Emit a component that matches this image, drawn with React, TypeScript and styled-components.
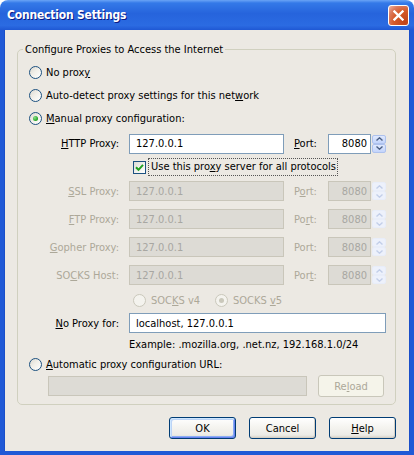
import React from "react";
import styled, { createGlobalStyle, css } from "styled-components";

const GlobalStyle = createGlobalStyle`
  html, body { margin: 0; padding: 0; background: #ffffff; }
  body {
    font-family: "DejaVu Sans Condensed", "DejaVu Sans", Tahoma, sans-serif;
    font-size: 11px;
    color: #000;
  }
  * { box-sizing: border-box; }
`;

const GREY = "#aca899";

const Window = styled.div`
  width: 414px;
  height: 455px;
  display: flex;
  flex-direction: column;
  border-radius: 8px 8px 0 0;
  overflow: hidden;
`;

const TitleBar = styled.div`
  flex: none;
  height: 30px;
  display: flex;
  align-items: center;
  justify-content: space-between;
  padding: 0 5px 0 7px;
  background: linear-gradient(
    180deg,
    #6aa4f6 0%,
    #3479e8 10%,
    #2664dc 45%,
    #2b6be2 85%,
    #1f58d4 100%
  );
`;

const Title = styled.span`
  font-family: "DejaVu Sans Condensed", "DejaVu Sans", sans-serif;
  font-weight: bold;
  font-size: 12px;
  color: #fff;
  text-shadow: 1px 1px #0a1883;
  letter-spacing: -0.2px;
`;

const CloseButton = styled.span`
  width: 21px;
  height: 21px;
  border: 1px solid #fff;
  border-radius: 3px;
  display: flex;
  align-items: center;
  justify-content: center;
  background: radial-gradient(
    circle at 85% 85%,
    #c0441a 0%,
    #d65a28 50%,
    #db7a5e 75%,
    #f0b8a4 100%
  );
`;

const Body = styled.div`
  flex: 1;
  display: flex;
  flex-direction: column;
  background: #ece9e3;
  border: solid #2059d6;
  border-width: 0 4px 4px;
  box-shadow: inset 1px 0 #1a4fc9, inset -1px 0 #1a4fc9;
  padding: 13px 14px 12px 13px;
`;

const Group = styled.fieldset`
  margin: 0;
  padding: 5px 9px 7px 0;
  min-width: 0;
  border: 1px solid #d0d0bf;
  border-radius: 5px;
`;

const Legend = styled.legend`
  margin-left: 5px;
  padding: 0 2px;
  line-height: 13px;
`;

const OptionRow = styled.div<{ $h?: number; $disabled?: boolean }>`
  display: flex;
  align-items: center;
  gap: 4px;
  height: ${(p) => p.$h ?? 23}px;
  padding-left: 11px;
  color: ${(p) => (p.$disabled ? GREY : "#000")};
  white-space: nowrap;
`;

const RadioCircle = styled.span<{ $checked?: boolean; $disabled?: boolean }>`
  flex: none;
  width: 13px;
  height: 13px;
  border-radius: 50%;
  border: 1px solid ${(p) => (p.$disabled ? "#cac8bb" : "#1c5180")};
  background: ${(p) =>
    p.$disabled
      ? "#f4f3ee"
      : "linear-gradient(135deg, #dcd9d1 0%, #f1efe9 45%, #ffffff 100%)"};
  display: flex;
  align-items: center;
  justify-content: center;
  &::after {
    content: "";
    display: ${(p) => (p.$checked ? "block" : "none")};
    width: 5px;
    height: 5px;
    border-radius: 50%;
    background: ${(p) =>
      p.$disabled ? "#cac8bb" : "radial-gradient(circle at 35% 35%, #8be08b, #21a121 70%)"};
  }
`;

const CheckBox = styled.span`
  flex: none;
  width: 13px;
  height: 13px;
  border: 1px solid #1c5180;
  background: linear-gradient(135deg, #dcdcd7 0%, #f3f3ef 60%, #ffffff 100%);
  display: flex;
  align-items: center;
  justify-content: center;
`;

const ProxyGrid = styled.div`
  display: grid;
  grid-template-columns: 101px 155px 24px 58px;
  column-gap: 10px;
  grid-template-rows: 27px 20px 28px 28px 28px 28px 22px 24px 19px;
  align-items: center;
`;

const FieldLabel = styled.span<{ $disabled?: boolean }>`
  justify-self: end;
  white-space: nowrap;
  color: ${(p) => (p.$disabled ? GREY : "#000")};
`;

const PortLabel = styled.span<{ $disabled?: boolean }>`
  white-space: nowrap;
  color: ${(p) => (p.$disabled ? GREY : "#000")};
`;

const TextInput = styled.input<{ $right?: boolean; $span?: boolean }>`
  height: 20px;
  width: 100%;
  min-width: 0;
  margin: 0;
  font: inherit;
  color: #000;
  background: #fff;
  border: 1px solid #7f9db9;
  padding: 0 ${(p) => (p.$right ? 3 : 4)}px 0 ${(p) => (p.$right ? 2 : 6)}px;
  text-align: ${(p) => (p.$right ? "right" : "left")};
  outline: none;
  ${(p) => p.$span && "grid-column: 2 / -1;"}
  &:disabled {
    background: #dddbd5;
    border-color: #c9c6ba;
    color: #a8a7a2;
    -webkit-text-fill-color: #a8a7a2;
    opacity: 1;
  }
`;

const PortField = styled.div`
  display: flex;
  align-items: center;
  height: 20px;
`;

const Spinner = styled.div`
  flex: none;
  width: 15px;
  height: 20px;
  display: flex;
  flex-direction: column;
  padding: 1px 0 1px 1px;
`;

const SpinButton = styled.span<{ $disabled?: boolean }>`
  flex: 1;
  border-radius: 2px;
  display: flex;
  align-items: center;
  justify-content: center;
  ${(p) =>
    p.$disabled
      ? css`
          border: 1px solid #e8edf9;
          background: #edf1fb;
        `
      : css`
          border: 1px solid #aec2ee;
          background: linear-gradient(180deg, #e0e9fd 0%, #c3d4fb 100%);
        `}
`;

const CheckRow = styled.div`
  grid-column: 2 / -1;
  display: flex;
  align-items: center;
  padding-left: 4px;
  height: 20px;
`;

const FocusText = styled.span`
  margin-left: 2px;
  padding: 0 1px 0 2px;
  height: 18px;
  line-height: 16px;
  border: 1px dotted #555;
  white-space: nowrap;
`;

const VersionRow = styled.div`
  grid-column: 2 / -1;
  display: flex;
  align-items: center;
  padding-left: 4px;
  color: ${GREY};
`;

const VersionOption = styled.span<{ $w?: number }>`
  display: flex;
  align-items: center;
  gap: 5px;
  width: ${(p) => (p.$w ? `${p.$w}px` : "auto")};
  white-space: nowrap;
`;

const Example = styled.span`
  grid-column: 2 / -1;
  white-space: nowrap;
`;

const UrlRow = styled.div`
  display: flex;
  align-items: center;
  height: 22px;
  padding-left: 30px;
  gap: 11px;
`;

const UrlBox = styled.input`
  width: 259px;
  height: 20px;
  margin: 0;
  font: inherit;
  background: #dddbd5;
  border: 1px solid #c9c6ba;
  outline: none;
`;

const PushButton = styled.button<{ $default?: boolean }>`
  width: 67px;
  height: 22px;
  margin: 0;
  padding: 0;
  font: inherit;
  color: #000;
  border: 1px solid #003c74;
  border-radius: 3px;
  background: linear-gradient(180deg, #ffffff 0%, #f5f4f0 45%, #ecebe6 85%, #d6d0c5 100%);
  box-shadow: inset -1px -1px #d6d0c5;
  ${(p) =>
    p.$default &&
    css`
      box-shadow: inset 1px 1px #cee7ff, inset -1px -1px #6982ee, inset 2px 2px #bcd4f6,
        inset -2px -2px #89adf4;
    `}
  &:disabled {
    color: ${GREY};
    border-color: #c9c7ba;
    background: #f5f4ea;
    box-shadow: none;
  }
`;

const ReloadButton = styled(PushButton)`
  width: 66px;
`;

const ButtonRow = styled.div`
  margin-top: auto;
  display: flex;
  justify-content: flex-end;
  gap: 13px;
`;

const U = styled.span`
  text-decoration: underline;
  text-underline-offset: 1px;
`;

const Chevron = ({ up, color }: { up?: boolean; color: string }) => (
  <svg width="7" height="4" viewBox="0 0 7 4">
    <path
      d={up ? "M0.5 3.5 L3.5 0.8 L6.5 3.5" : "M0.5 0.5 L3.5 3.2 L6.5 0.5"}
      fill="none"
      stroke={color}
      strokeWidth="1.4"
    />
  </svg>
);

const Port = ({ disabled }: { disabled?: boolean }) => (
  <PortField>
    <TextInput $right value="8080" readOnly disabled={disabled} />
    <Spinner>
      <SpinButton $disabled={disabled}>
        <Chevron up color={disabled ? "#c3cfe9" : "#4d6185"} />
      </SpinButton>
      <SpinButton $disabled={disabled}>
        <Chevron color={disabled ? "#c3cfe9" : "#4d6185"} />
      </SpinButton>
    </Spinner>
  </PortField>
);

type ProxyRowProps = {
  label: React.ReactNode;
  port: React.ReactNode;
  disabled?: boolean;
};

const ProxyRow = ({ label, port, disabled }: ProxyRowProps) => (
  <>
    <FieldLabel $disabled={disabled}>{label}</FieldLabel>
    <TextInput value="127.0.0.1" readOnly disabled={disabled} />
    <PortLabel $disabled={disabled}>{port}</PortLabel>
    <Port disabled={disabled} />
  </>
);

export default function App() {
  return (
    <>
      <GlobalStyle />
      <Window>
        <TitleBar>
          <Title>Connection Settings</Title>
          <CloseButton>
            <svg width="11" height="11" viewBox="0 0 11 11">
              <path d="M1.5 1.5 L9.5 9.5 M9.5 1.5 L1.5 9.5" stroke="#fff" strokeWidth="2.3" strokeLinecap="square" />
            </svg>
          </CloseButton>
        </TitleBar>
        <Body>
          <Group>
            <Legend>Configure Proxies to Access the Internet</Legend>
            <OptionRow>
              <RadioCircle />
              <span>
                No prox<U>y</U>
              </span>
            </OptionRow>
            <OptionRow>
              <RadioCircle />
              <span>
                Auto-detect proxy settings for this net<U>w</U>ork
              </span>
            </OptionRow>
            <OptionRow>
              <RadioCircle $checked />
              <span>
                <U>M</U>anual proxy configuration:
              </span>
            </OptionRow>
            <ProxyGrid>
              <ProxyRow
                label={
                  <>
                    <U>H</U>TTP Proxy:
                  </>
                }
                port={
                  <>
                    <U>P</U>ort:
                  </>
                }
              />
              <CheckRow>
                <CheckBox>
                  <svg width="9" height="9" viewBox="0 0 9 9">
                    <path d="M1 4.2 L3.5 6.8 L8 1.8" fill="none" stroke="#21a121" strokeWidth="2" />
                  </svg>
                </CheckBox>
                <FocusText>
                  Use this pro<U>x</U>y server for all protocols
                </FocusText>
              </CheckRow>
              <ProxyRow
                disabled
                label={
                  <>
                    <U>S</U>SL Proxy:
                  </>
                }
                port={
                  <>
                    P<U>o</U>rt:
                  </>
                }
              />
              <ProxyRow
                disabled
                label={
                  <>
                    <U>F</U>TP Proxy:
                  </>
                }
                port={
                  <>
                    Po<U>r</U>t:
                  </>
                }
              />
              <ProxyRow
                disabled
                label={
                  <>
                    <U>G</U>opher Proxy:
                  </>
                }
                port="Port:"
              />
              <ProxyRow
                disabled
                label={
                  <>
                    SO<U>C</U>KS Host:
                  </>
                }
                port={
                  <>
                    Por<U>t</U>:
                  </>
                }
              />
              <VersionRow>
                <VersionOption $w={82}>
                  <RadioCircle $disabled />
                  <span>
                    SOC<U>K</U>S v4
                  </span>
                </VersionOption>
                <VersionOption>
                  <RadioCircle $disabled $checked />
                  <span>
                    SOCKS <U>v</U>5
                  </span>
                </VersionOption>
              </VersionRow>
              <FieldLabel>
                <U>N</U>o Proxy for:
              </FieldLabel>
              <TextInput $span value="localhost, 127.0.0.1" readOnly />
              <Example>Example: .mozilla.org, .net.nz, 192.168.1.0/24</Example>
            </ProxyGrid>
            <OptionRow $h={21}>
              <RadioCircle />
              <span>
                <U>A</U>utomatic proxy configuration URL:
              </span>
            </OptionRow>
            <UrlRow>
              <UrlBox readOnly disabled />
              <ReloadButton disabled>
                Re<U>l</U>oad
              </ReloadButton>
            </UrlRow>
          </Group>
          <ButtonRow>
            <PushButton $default>OK</PushButton>
            <PushButton>Cancel</PushButton>
            <PushButton>
              <U>H</U>elp
            </PushButton>
          </ButtonRow>
        </Body>
      </Window>
    </>
  );
}
